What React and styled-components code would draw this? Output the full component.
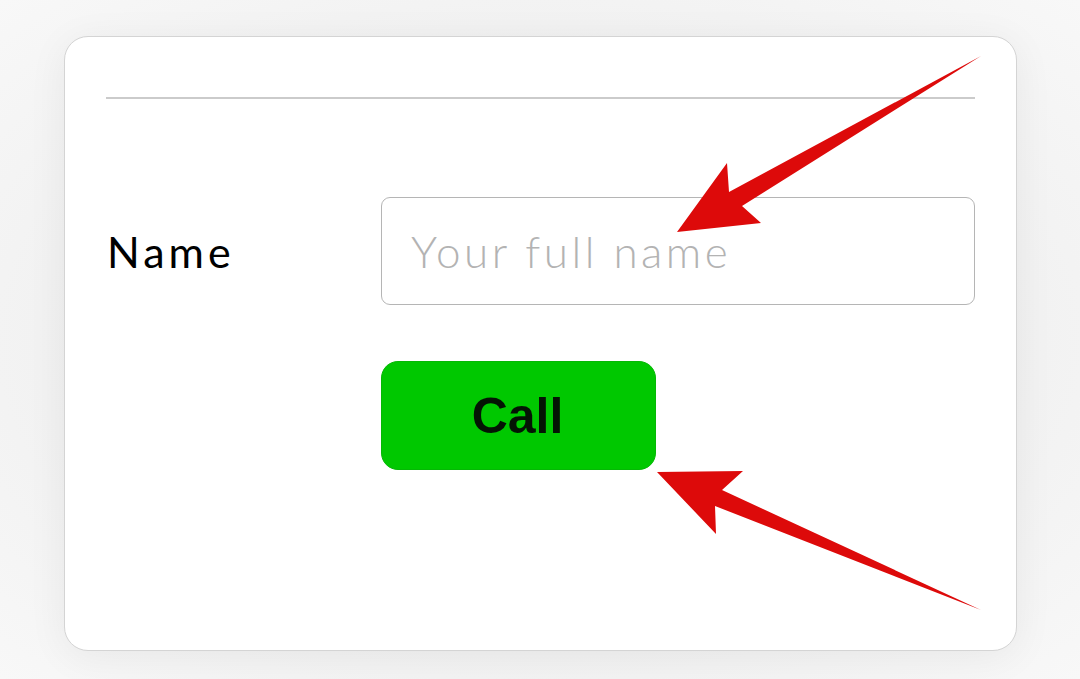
import React from "react";
import styled, { createGlobalStyle } from "styled-components";

const GlobalStyle = createGlobalStyle`
  html, body {
    margin: 0;
    padding: 0;
    background: #f6f6f6;
  }
  * {
    box-sizing: border-box;
  }
`;

const Page = styled.div`
  width: 1080px;
  height: 679px;
  padding: 36px 0 0 64px;
  overflow: hidden;
  background: radial-gradient(ellipse at center, #e6e6e6 0%, #f1f1f1 60%, #f8f8f8 100%);
`;

const Card = styled.div`
  width: 953px;
  height: 615px;
  background: #fff;
  border: 1.5px solid #d4d4d4;
  border-radius: 24px;
  padding: 60px 41px 0 41px;
  box-shadow: 0 6px 40px rgba(0, 0, 0, 0.06);
`;

const Divider = styled.div`
  height: 2px;
  background: #cbcbcb;
`;

const Row = styled.div`
  display: grid;
  grid-template-columns: 275px 1fr;
  align-items: center;
  margin-top: ${p => p.top}px;
`;

const Label = styled.label`
  font-family: Lato, "Open Sans", sans-serif;
  font-size: 43px;
  font-weight: 400;
  letter-spacing: 4px;
  color: #000;
  padding-left: 1px;
`;

const NameInput = styled.input`
  height: 108px;
  width: 100%;
  border: 1.5px solid #b5b5b5;
  border-radius: 9px;
  padding: 0 0 0 29px;
  font-family: Lato, "Open Sans", sans-serif;
  font-size: 44px;
  font-weight: 300;
  letter-spacing: 3.5px;
  color: #222;
  outline: none;
  &::placeholder {
    color: #b3b3b3;
  }
`;

const CallButton = styled.button`
  grid-column: 2;
  width: 275px;
  height: 109px;
  background: #00c800;
  border: 1px solid #05b805;
  border-radius: 17px;
  font-family: "Liberation Sans", Arial, sans-serif;
  font-weight: 700;
  font-size: 50px;
  color: #041404;
  padding: 0 2px 0 0;
  cursor: pointer;
`;

const Overlay = styled.svg`
  position: fixed;
  top: 0;
  left: 0;
  width: 1080px;
  height: 679px;
  pointer-events: none;
`;

const arrows = [
  "677,232 727,163 729,192 981,56 742,206 761,223",
  "657,472 743,471 722,490 981,610 715,506 716,534",
];

export default function App() {
  return (
    <>
      <GlobalStyle />
      <Page>
        <Card>
          <Divider />
          <Row top={98}>
            <Label htmlFor="fullname">Name</Label>
            <NameInput id="fullname" placeholder="Your full name" />
          </Row>
          <Row top={56}>
            <CallButton>Call</CallButton>
          </Row>
        </Card>
      </Page>
      <Overlay viewBox="0 0 1080 679">
        {arrows.map(pts => (
          <polygon key={pts} points={pts} fill="#dd0a0a" />
        ))}
      </Overlay>
    </>
  );
}
